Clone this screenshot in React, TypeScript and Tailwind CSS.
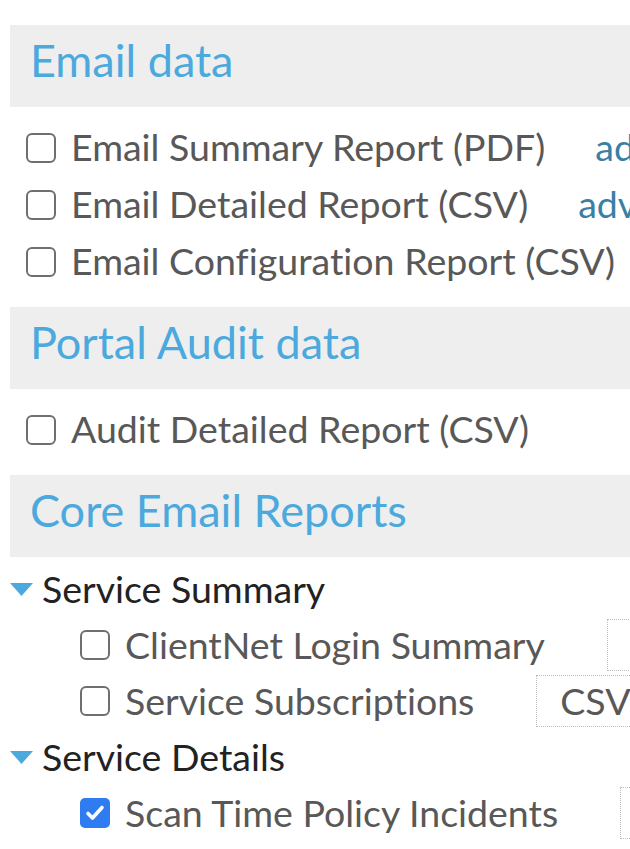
import React from 'react';

const font = { fontFamily: 'Lato, "Open Sans", sans-serif' };

function Box({ checked }: { checked?: boolean }) {
  if (checked) {
    return (
      <span className="flex h-[30px] w-[30px] shrink-0 items-center justify-center rounded-[5px] bg-[#2f7cf0]">
        <svg viewBox="0 0 24 24" className="h-[24px] w-[24px]" fill="none" stroke="#fff" strokeWidth={3.6} strokeLinecap="round" strokeLinejoin="round">
          <path d="M5 12.5l4.5 4.5L19 6.5" />
        </svg>
      </span>
    );
  }
  return <span className="h-[30px] w-[30px] shrink-0 rounded-[6px] border-2 border-[#6f6f6f] bg-white" />;
}

function Band({ title }: { title: string }) {
  return (
    <div className="ml-[10px] flex h-[82px] items-start bg-[#eeeeee] pl-[20px] pt-[7px]">
      <h2 className="whitespace-nowrap text-[45px] leading-[56px] text-[#4ba9de]">{title}</h2>
    </div>
  );
}

function Row({ label, link }: { label: string; link?: string }) {
  return (
    <div className="flex h-[57px] items-center whitespace-nowrap pl-[26px]">
      <Box />
      <span className="ml-[15px] text-[37.5px] text-[#585858]">{label}</span>
      {link && <a className="ml-[50px] text-[37.5px] text-[#3b7fa4]">{link}</a>}
    </div>
  );
}

function Group({ title }: { title: string }) {
  return (
    <div className="flex h-[56px] items-center whitespace-nowrap pl-[10px]">
      <svg viewBox="0 0 23 13" className="h-[13px] w-[23px] shrink-0">
        <path d="M0 0h23L11.5 13z" fill="#4ba9de" />
      </svg>
      <span className="ml-[9px] text-[37.5px] text-[#222222]">{title}</span>
    </div>
  );
}

function Item({ label, checked, value }: { label: string; checked?: boolean; value?: string }) {
  return (
    <div className="flex h-[56px] items-center whitespace-nowrap pl-[80px]">
      <Box checked={checked} />
      <span className="ml-[15px] text-[37.5px] text-[#585858]">{label}</span>
      <div className="ml-[62px] flex h-[52px] w-[160px] shrink-0 items-center border border-dotted border-[#bdbdbd] pl-[23px] text-[37.5px] text-[#585858]">
        {value}
      </div>
    </div>
  );
}

export default function App() {
  return (
    <div className="h-[849px] w-[630px] overflow-hidden bg-white [font-variant-ligatures:none]" style={font}>
      <div className="w-[900px] pt-[25px]">
        <Band title="Email data" />
        <div className="pb-[17px] pt-[12px]">
          <Row label="Email Summary Report (PDF)" link="advanced" />
          <Row label="Email Detailed Report (CSV)" link="advanced" />
          <Row label="Email Configuration Report (CSV)" />
        </div>
        <Band title="Portal Audit data" />
        <div className="pb-[17px] pt-[12px]">
          <Row label="Audit Detailed Report (CSV)" />
        </div>
        <Band title="Core Email Reports" />
        <div className="pt-[4px]">
          <Group title="Service Summary" />
          <Item label="ClientNet Login Summary" value="CSV" />
          <Item label="Service Subscriptions" value="CSV" />
          <Group title="Service Details" />
          <Item label="Scan Time Policy Incidents" checked value="CSV" />
        </div>
      </div>
    </div>
  );
}
